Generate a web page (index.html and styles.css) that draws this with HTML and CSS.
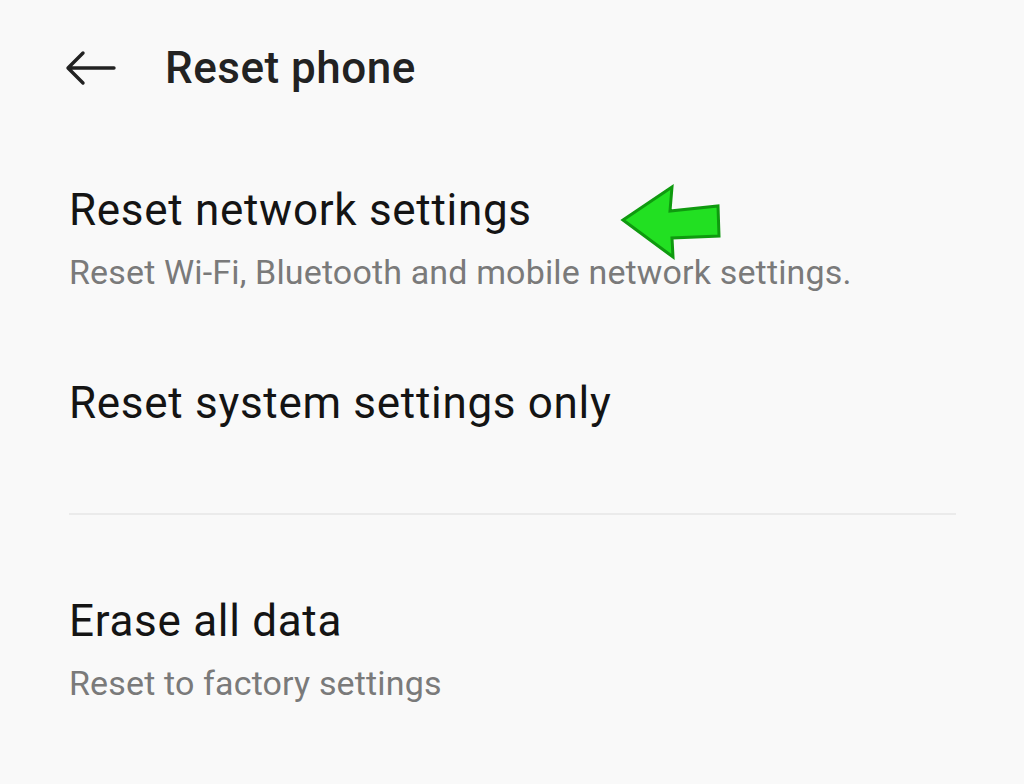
FILE: index.html
```html
<!DOCTYPE html>
<html>
<head>
<meta charset="utf-8">
<link rel="stylesheet" href="styles.css">
</head>
<body>
<div class="screen">
  <header class="topbar">
    <svg class="back" width="52" height="36" viewBox="0 0 52 36">
      <path d="M49 18 H4 M18 3 L3 18 L18 33" fill="none" stroke="#222" stroke-width="3.4" stroke-linecap="round" stroke-linejoin="round"/>
    </svg>
    <h1 class="title">Reset phone</h1>
  </header>
  <section class="group">
    <div class="item item-first">
      <div class="item-title">Reset network settings</div>
      <div class="item-sub">Reset Wi-Fi, Bluetooth and mobile network settings.</div>
      <svg class="pointer" width="104" height="78" viewBox="0 0 104 78">
        <path d="M3 36 L52 3 L50 27 L98 22 L99 52 L52 54 L53 73 Z" fill="#22e022" stroke="#0f9a0f" stroke-width="3" stroke-linejoin="miter"/>
      </svg>
    </div>
    <div class="item item-second">
      <div class="item-title">Reset system settings only</div>
    </div>
  </section>
  <div class="divider"></div>
  <section class="group">
    <div class="item item-third">
      <div class="item-title">Erase all data</div>
      <div class="item-sub">Reset to factory settings</div>
    </div>
  </section>
</div>
</body>
</html>
```
FILE: styles.css
```css
html, body {
  margin: 0;
  padding: 0;
  background: #f9f9f9;
}
body {
  font-family: Roboto, "Noto Sans", sans-serif;
  width: 1024px;
  height: 784px;
  overflow: hidden;
}
.screen {
  padding: 40px 68px 0 69px;
}
.topbar {
  display: flex;
  align-items: center;
  gap: 48px;
  height: 56px;
  margin-left: -4px;
}
.back {
  display: block;
}
.title {
  margin: 0;
  font-size: 44px;
  line-height: 56px;
  font-weight: 500;
  color: #222;
  letter-spacing: 0.5px;
}
.group {
  display: flex;
  flex-direction: column;
}
.item {
  position: relative;
}
.item-first {
  margin-top: 86px;
}
.item-title {
  font-size: 44px;
  line-height: 56px;
  letter-spacing: 0.7px;
  color: #141414;
}
.item-sub {
  font-size: 34px;
  line-height: 44px;
  letter-spacing: 0.15px;
  color: #7a7a7a;
  margin-top: 12px;
}
.item-second {
  margin-top: 81px;
}
.pointer {
  position: absolute;
  left: 551px;
  top: 2px;
}
.divider {
  height: 2px;
  background: #ebebeb;
  margin-top: 82px;
}
.item-third {
  margin-top: 78px;
}
```
